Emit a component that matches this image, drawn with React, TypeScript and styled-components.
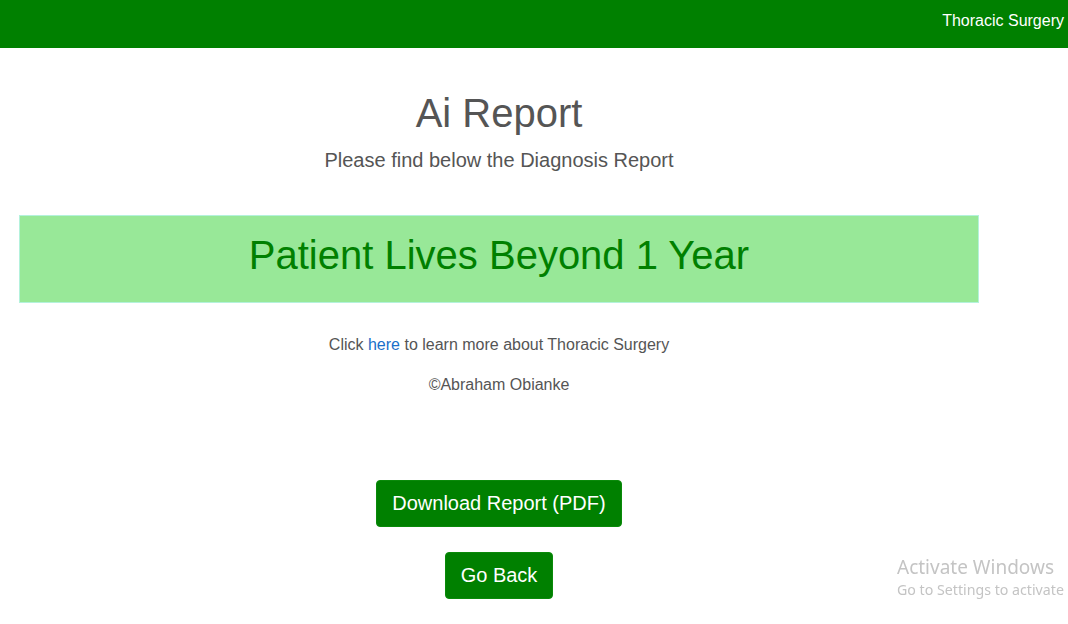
import React from "react";
import styled, { createGlobalStyle } from "styled-components";

const GlobalStyle = createGlobalStyle`
  html, body {
    margin: 0;
    padding: 0;
    background: #ffffff;
    font-family: "Liberation Sans", Arial, sans-serif;
    color: #555555;
  }
  * { box-sizing: border-box; }
`;

const Header = styled.header`
  height: 48px;
  background: #008000;
  display: flex;
  justify-content: flex-end;
  align-items: flex-start;
  padding: 11px 4px 0 0;
`;

const Brand = styled.span`
  color: #ffffff;
  font-size: 16px;
  line-height: 20px;
`;

const Main = styled.main`
  width: 960px;
  margin-left: 19px;
  display: flex;
  flex-direction: column;
  align-items: center;
  text-align: center;
`;

const Title = styled.h1`
  margin: 43px 0 0;
  font-size: 40px;
  line-height: 44px;
  font-weight: 400;
  color: #555555;
`;

const Subtitle = styled.p`
  margin: 12.5px 0 0;
  font-size: 20px;
  line-height: 24px;
  color: #555555;
`;

const ResultBox = styled.div`
  align-self: stretch;
  margin-top: 43.5px;
  height: 88px;
  background: #98e898;
  border: 1px solid #b4f2dc;
  padding: 17px 0 0;
`;

const Result = styled.h2`
  margin: 0;
  font-size: 40px;
  line-height: 44px;
  font-weight: 400;
  color: #008000;
`;

const Note = styled.p<{ $gap: number }>`
  margin: ${(p) => p.$gap}px 0 0;
  font-size: 16px;
  line-height: 20px;
  color: #555555;
`;

const Link = styled.a`
  color: #1a6fc9;
  text-decoration: none;
`;

const Button = styled.button<{ $gap: number }>`
  margin-top: ${(p) => p.$gap}px;
  background: #008000;
  color: #ffffff;
  border: 1px solid #0a8a0a;
  border-radius: 4px;
  font-family: "Liberation Sans", Arial, sans-serif;
  font-size: 20px;
  line-height: 26px;
  padding: 9px 15px 10px;
  cursor: pointer;
`;

const Watermark = styled.div`
  position: fixed;
  left: 897px;
  top: 555px;
  font-family: "Noto Sans", "Open Sans", sans-serif;
  color: #c4c4c4;
  pointer-events: none;
`;

const WatermarkTitle = styled.div`
  font-size: 19px;
  line-height: 25px;
`;

const WatermarkSub = styled.div`
  font-size: 14.2px;
  line-height: 20px;
`;

export default function App() {
  return (
    <>
      <GlobalStyle />
      <Header>
        <Brand>Thoracic Surgery</Brand>
      </Header>
      <Main>
        <Title>Ai Report</Title>
        <Subtitle>Please find below the Diagnosis Report</Subtitle>
        <ResultBox>
          <Result>Patient Lives Beyond 1 Year</Result>
        </ResultBox>
        <Note $gap={31.5}>
          Click <Link href="#">here</Link> to learn more about Thoracic Surgery
        </Note>
        <Note $gap={20.5}>©Abraham Obianke</Note>
        <Button $gap={85}>Download Report (PDF)</Button>
        <Button $gap={25}>Go Back</Button>
      </Main>
      <Watermark>
        <WatermarkTitle>Activate Windows</WatermarkTitle>
        <WatermarkSub>Go to Settings to activate</WatermarkSub>
      </Watermark>
    </>
  );
}
